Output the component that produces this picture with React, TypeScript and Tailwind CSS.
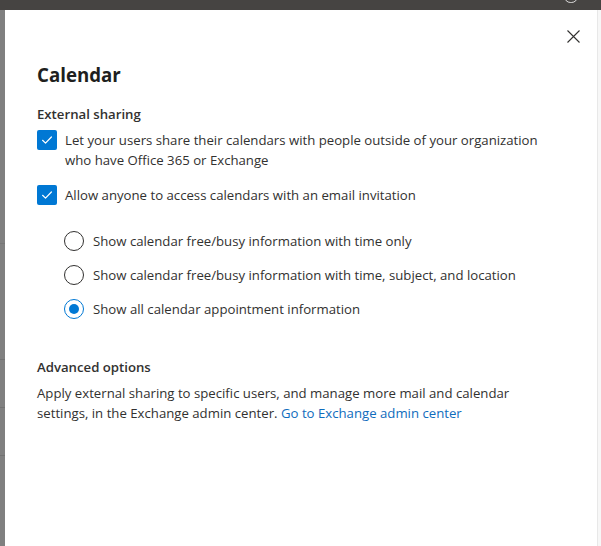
import type { ReactNode } from "react";

const font = { fontFamily: '"Open Sans", "Noto Sans", sans-serif' };

function Checkbox() {
  return (
    <span className="flex h-5 w-5 shrink-0 items-center justify-center rounded-[2px] bg-[#0078d4]">
      <svg width="14" height="14" viewBox="0 0 14 14" fill="none">
        <path d="M2.6 7.3 5.5 10.1 11.4 4" stroke="#fff" strokeWidth="1.2" strokeLinecap="round" strokeLinejoin="round" />
      </svg>
    </span>
  );
}

function Radio({ checked }: { checked?: boolean }) {
  return (
    <span
      className={
        checked
          ? "flex h-5 w-5 shrink-0 items-center justify-center rounded-full border border-[#0078d4]"
          : "flex h-5 w-5 shrink-0 items-center justify-center rounded-full border border-[#323130]"
      }
    >
      {checked && <span className="h-[10px] w-[10px] rounded-full bg-[#0078d4]" />}
    </span>
  );
}

function CheckRow({ children }: { children: ReactNode }) {
  return (
    <div className="flex items-start gap-2">
      <Checkbox />
      <div className="text-[13.2px] leading-5 text-[#323130]">{children}</div>
    </div>
  );
}

function RadioRow({ label, checked }: { label: string; checked?: boolean }) {
  return (
    <div className="flex items-center gap-[9px]">
      <Radio checked={checked} />
      <span className="whitespace-nowrap text-[13.2px] leading-5 text-[#323130]">{label}</span>
    </div>
  );
}

export default function App() {
  return (
    <div className="flex h-[546px] w-[601px] flex-col overflow-hidden bg-white" style={font}>
      {/* top suite bar, mostly cut off */}
      <div className="relative h-[10px] shrink-0 bg-[#464442]">
        <span className="absolute left-[564px] top-[-10px] h-[13px] w-[14px] rounded-full border border-white/80" />
      </div>

      <div className="flex flex-1">
        {/* dimmed page behind the panel */}
        <div className="flex w-[5px] shrink-0 flex-col bg-[#808080]">
          <div className="h-[233px]" />
          <div className="h-px bg-[#777]" />
          <div className="h-[115px]" />
          <div className="h-px bg-[#727272]" />
          <div className="h-[47px]" />
          <div className="h-px bg-[#727272]" />
          <div className="h-[47px]" />
          <div className="h-px bg-[#727272]" />
        </div>

        <div className="relative flex-1 pl-[32px] pt-[51px]">
          <button className="absolute right-[8px] top-[10px] flex h-8 w-8 items-center justify-center">
            <svg width="13" height="13" viewBox="0 0 13 13" fill="none">
              <path d="M0.5 0.5 12.5 12.5M12.5 0.5 0.5 12.5" stroke="#323130" strokeWidth="1.1" />
            </svg>
          </button>

          <h1 className="text-[18.7px] font-bold leading-7 text-[#201f1e]">Calendar</h1>

          <h2 className="mt-[15px] text-[13.2px] font-semibold leading-5 text-[#323130]">External sharing</h2>

          <div className="mt-[6px] flex flex-col gap-[15px]">
            <CheckRow>
              Let your users share their calendars with people outside of your organization
              <br />
              who have Office 365 or Exchange
            </CheckRow>
            <CheckRow>Allow anyone to access calendars with an email invitation</CheckRow>
          </div>

          <div className="ml-[27px] mt-[26px] flex flex-col gap-[14px]">
            <RadioRow label="Show calendar free/busy information with time only" />
            <RadioRow label="Show calendar free/busy information with time, subject, and location" />
            <RadioRow label="Show all calendar appointment information" checked />
          </div>

          <h2 className="mt-[38px] text-[13.2px] font-semibold leading-5 text-[#323130]">Advanced options</h2>
          <p className="mt-[6px] text-[13.2px] leading-5 text-[#323130]">
            Apply external sharing to specific users, and manage more mail and calendar
            <br />
            settings, in the Exchange admin center.{" "}
            <a className="text-[#0f6cbd]">Go to Exchange admin center</a>
          </p>
        </div>

        {/* scrollbar track */}
        <div className="w-[4px] shrink-0 border-l border-[#e8e8e8] bg-[#f7f7f7]" />
      </div>
    </div>
  );
}
